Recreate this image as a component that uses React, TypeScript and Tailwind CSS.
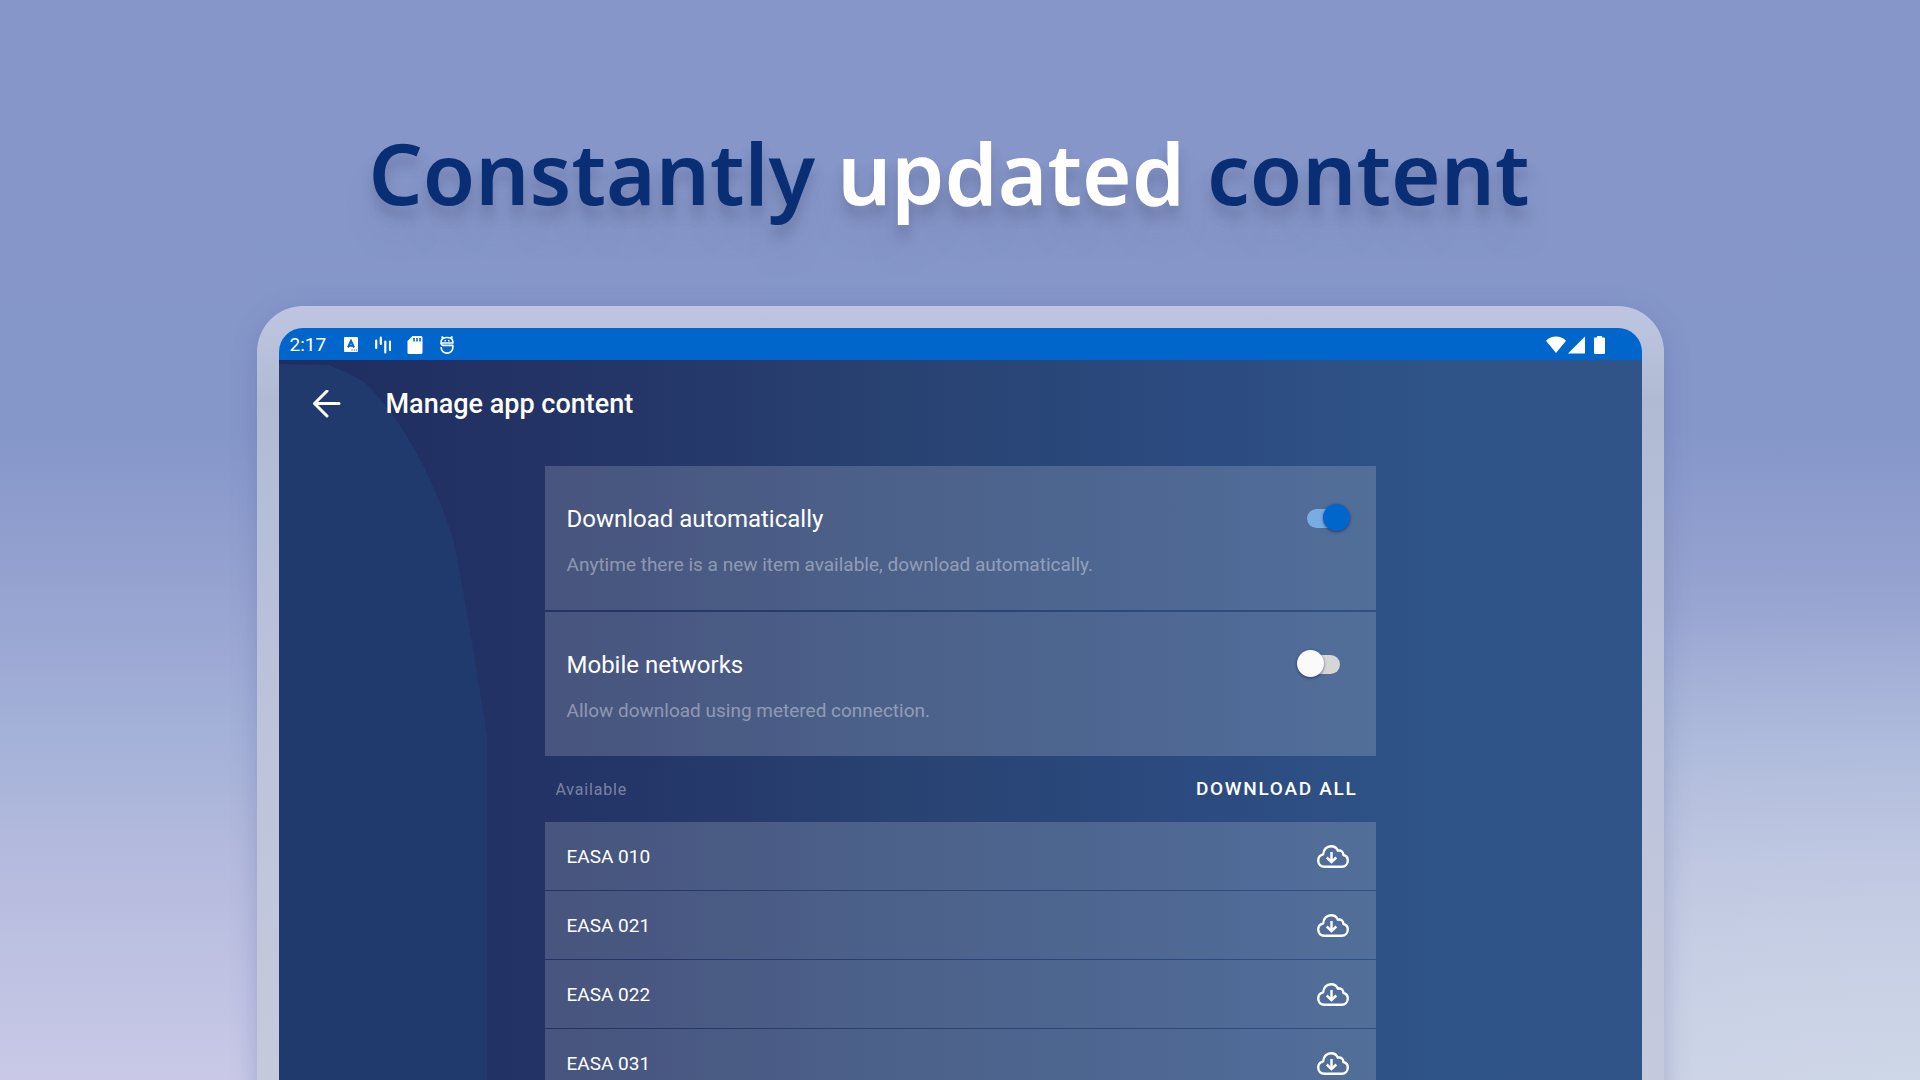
import { useState } from 'react'

const items = ['EASA 010', 'EASA 021', 'EASA 022', 'EASA 031']

const StatusBar = () => {
  return (
    <div className="h-8 pt-px bg-[#0066cc] flex items-center justify-between pl-[11px] pr-[37px] text-white">
      <div className="flex items-center gap-[17px]">
        <span className="text-[19px] leading-7">2:17</span>
        <div className="flex items-center gap-4">
          <svg className="w-4 h-4" viewBox="0 0 16 16">
            <rect x="1" y="0" width="14" height="15" rx="1" fill="currentColor" />
            <path d="M5 10.500L8 3.900l3 6.600M6.300 8.700h3.400" fill="none" stroke="#0066cc" strokeWidth="2" />
            <path d="M8.500 13h1.200M10.700 13h1.200M12.900 13h1.200" stroke="#0066cc" strokeWidth="1" />
          </svg>
          <svg className="w-4 h-[18px]" viewBox="0 0 16 18" fill="none" stroke="currentColor" strokeWidth="2.200" strokeLinecap="round">
            <path d="M1.200 4.500v7.500M5.800 1.500v6.500M10.300 5.500v11M15 5.500v8.500" />
          </svg>
          <svg className="w-4 h-[18px]" viewBox="0 0 16 18">
            <path d="M5.500 0H14a1.500 1.500 0 0 1 1.500 1.500v15A1.500 1.500 0 0 1 14 18H2A1.500 1.500 0 0 1 .5 16.500V5z" fill="currentColor" />
            <path d="M7 2v3.500M10 2v3.500M13 2v3.500" stroke="#0066cc" strokeWidth="1.600" />
          </svg>
          <svg className="w-4 h-[18px]" viewBox="0 0 16 18" fill="none" stroke="currentColor" strokeWidth="1.700" strokeLinejoin="round">
            <path d="M2.500.5L5 2.500M13.500.5L11 2.500M2.200 7V5.500C2.200 3 4.700 1.500 8 1.500s5.800 1.500 5.800 4V7z" />
            <path d="M2.200 7c0 1.500.8 2.300 2 2.300h9.600v2.500a5.800 5.300 0 0 1-11.600 0V11" />
            <path d="M5.500 4.700h1.500M9 4.700h1.500" strokeWidth="1.500" />
          </svg>
        </div>
      </div>
      <div className="flex items-center gap-[2px]">
        <svg className="w-5 h-[18px]" viewBox="0 0 20 18" fill="currentColor">
          <path d="M10 17L0 4.700C3 1.800 6.300.5 10 .5s7 1.300 10 4.200z" />
        </svg>
        <svg className="w-[17px] h-[18px]" viewBox="0 0 17 18" fill="currentColor">
          <path d="M17 .5v17H0z" />
        </svg>
        <svg className="w-[11px] h-[18px] ml-[7px]" viewBox="0 0 11 18" fill="currentColor">
          <path d="M3 0h5v1.500h2a1 1 0 0 1 1 1V17a1 1 0 0 1-1 1H1a1 1 0 0 1-1-1V2.500a1 1 0 0 1 1-1h2z" />
        </svg>
      </div>
    </div>
  )
}

type SettingProps = {
  id: string
  title: string
  hint: string
  initial: boolean
}

const Setting = ({ id, title, hint, initial }: SettingProps) => {
  const [on, setOn] = useState(initial)

  return (
    <div className="h-36 bg-white/17 flex items-start justify-between pl-[22px] pr-[26px] pt-9">
      <div>
        <label htmlFor={id} className="block text-2xl leading-[34px] text-white">{title}</label>
        <p className="mt-[15px] text-[19px] leading-7 text-white/40">{hint}</p>
      </div>
      <div className="relative w-[53px] h-8 flex items-center justify-center">
        <input
          id={id}
          type="checkbox"
          role="switch"
          checked={on}
          onChange={() => setOn(!on)}
          className="peer appearance-none w-[33px] h-[19px] rounded-full bg-[#d6d6d6] checked:bg-[#78ade4] cursor-pointer"
        />
        <span className="absolute left-0 top-[2px] w-[27px] h-[27px] rounded-full bg-[#fafafa] shadow-[0_1px_3px_rgba(20,20,70,0.6)] pointer-events-none peer-checked:left-auto peer-checked:right-0 peer-checked:bg-[#0066cc]" />
      </div>
    </div>
  )
}

const CloudIcon = () => {
  return (
    <svg className="w-8 h-6" viewBox="0 0 32 24" fill="none" stroke="currentColor" strokeWidth="2.400" strokeLinecap="round" strokeLinejoin="round">
      <path d="M7.500 21.800C3.700 21.800 1.200 19.200 1.200 15.600c0-3.200 2-5.600 5-6.300C6.500 4.500 9.800 1.200 14 1.200c3.300 0 5.800 1.700 6.900 4.500 3.200-.8 5.500 1.200 5.500 4.300 2.700.7 4.400 2.800 4.400 5.500 0 3.500-2.500 6.300-6.100 6.300z" />
      <path d="M14.500 7v9.700M9.700 12.500l4.800 4.500 4.800-4.500" strokeLinecap="butt" strokeLinejoin="miter" />
    </svg>
  )
}

const App = () => {
  return (
    <main className="h-screen overflow-hidden flex flex-col items-center bg-[radial-gradient(ellipse_60%_45%_at_bottom_right,rgba(207,219,231,0.75),transparent),linear-gradient(to_bottom,#8696c9_0%,#8596c9_40%,#99a5d2_57%,#a4b1d8_68%,#b5bbde_80%,#c9c9e7_100%)] font-[Roboto,sans-serif]">
      <h1 className="mt-28 h-[120px] pr-[22px] shrink-0 whitespace-nowrap font-['Noto_Sans','Open_Sans',sans-serif] text-[85px] leading-[120px] font-semibold text-[#0a2e73] [text-shadow:0_12px_12px_rgba(70,80,120,0.3),0_30px_30px_rgba(110,120,150,0.2)]">
        Constantly <span className="text-white">updated</span> content
      </h1>

      <div className="mt-[74px] w-[1407px] max-w-full grow shrink-0 rounded-t-[46px] p-[22px] pb-0 flex flex-col bg-[linear-gradient(to_bottom,#bfc5e1,#b0bbd3_12%,#b9c1da_40%,#c6cadd)] shadow-[0_6px_24px_rgba(90,105,160,0.35)]">
        <div className="grow rounded-t-[24px] overflow-hidden flex flex-col">
          <StatusBar />
          <div className="relative grow bg-[linear-gradient(to_right,#1f2d60,#243567_25%,#284272_45%,#2c4b80_68%,#2f5488_85%,#305488)]">
            <svg className="absolute left-0 top-1 w-[208px] h-[716px]" viewBox="0 0 208 716" fill="#213a6e">
              <path d="M0 0L50 1C65 8 85 14 95 28C125 60 155 115 173 172C180 195 200 320 208 370V716H0z" />
            </svg>

            <div className="relative flex flex-col">
              <header className="h-[106px] pt-5 pl-7 flex items-start gap-[39px] text-white">
                <button type="button" aria-label="Back" className="w-10 h-12 flex items-center justify-center cursor-pointer">
                  <svg className="w-7 h-7" viewBox="0 0 28 28" fill="none" stroke="currentColor" strokeWidth="3" strokeLinecap="round" strokeLinejoin="round">
                    <path d="M26 13.500H1.500M14 1L1.500 13.500 14 26" />
                  </svg>
                </button>
                <h2 className="text-[27px] leading-[48px] font-medium">Manage app content</h2>
              </header>

              <section className="w-[831px] max-w-full mx-auto">
                <div className="flex flex-col gap-[2px]">
                  <Setting id="auto" title="Download automatically" hint="Anytime there is a new item available, download automatically." initial={true} />
                  <Setting id="mobile" title="Mobile networks" hint="Allow download using metered connection." initial={false} />
                </div>

                <div className="h-[66px] pl-[11px] pr-[18px] pt-px flex items-center justify-between">
                  <h3 className="text-base tracking-wider text-white/40">Available</h3>
                  <button type="button" className="text-[19px] font-medium tracking-[0.09em] text-white cursor-pointer">DOWNLOAD ALL</button>
                </div>

                <ul className="flex flex-col gap-px">
                  {items.map((item) => (
                    <li key={item} className="h-[68px] pt-[2px] bg-white/17 pl-[22px] pr-[27px] flex items-center justify-between text-white">
                      <span className="text-[19px]">{item}</span>
                      <button type="button" aria-label={`Download ${item}`} className="cursor-pointer">
                        <CloudIcon />
                      </button>
                    </li>
                  ))}
                </ul>
              </section>
            </div>
          </div>
        </div>
      </div>
    </main>
  )
}

export default App
